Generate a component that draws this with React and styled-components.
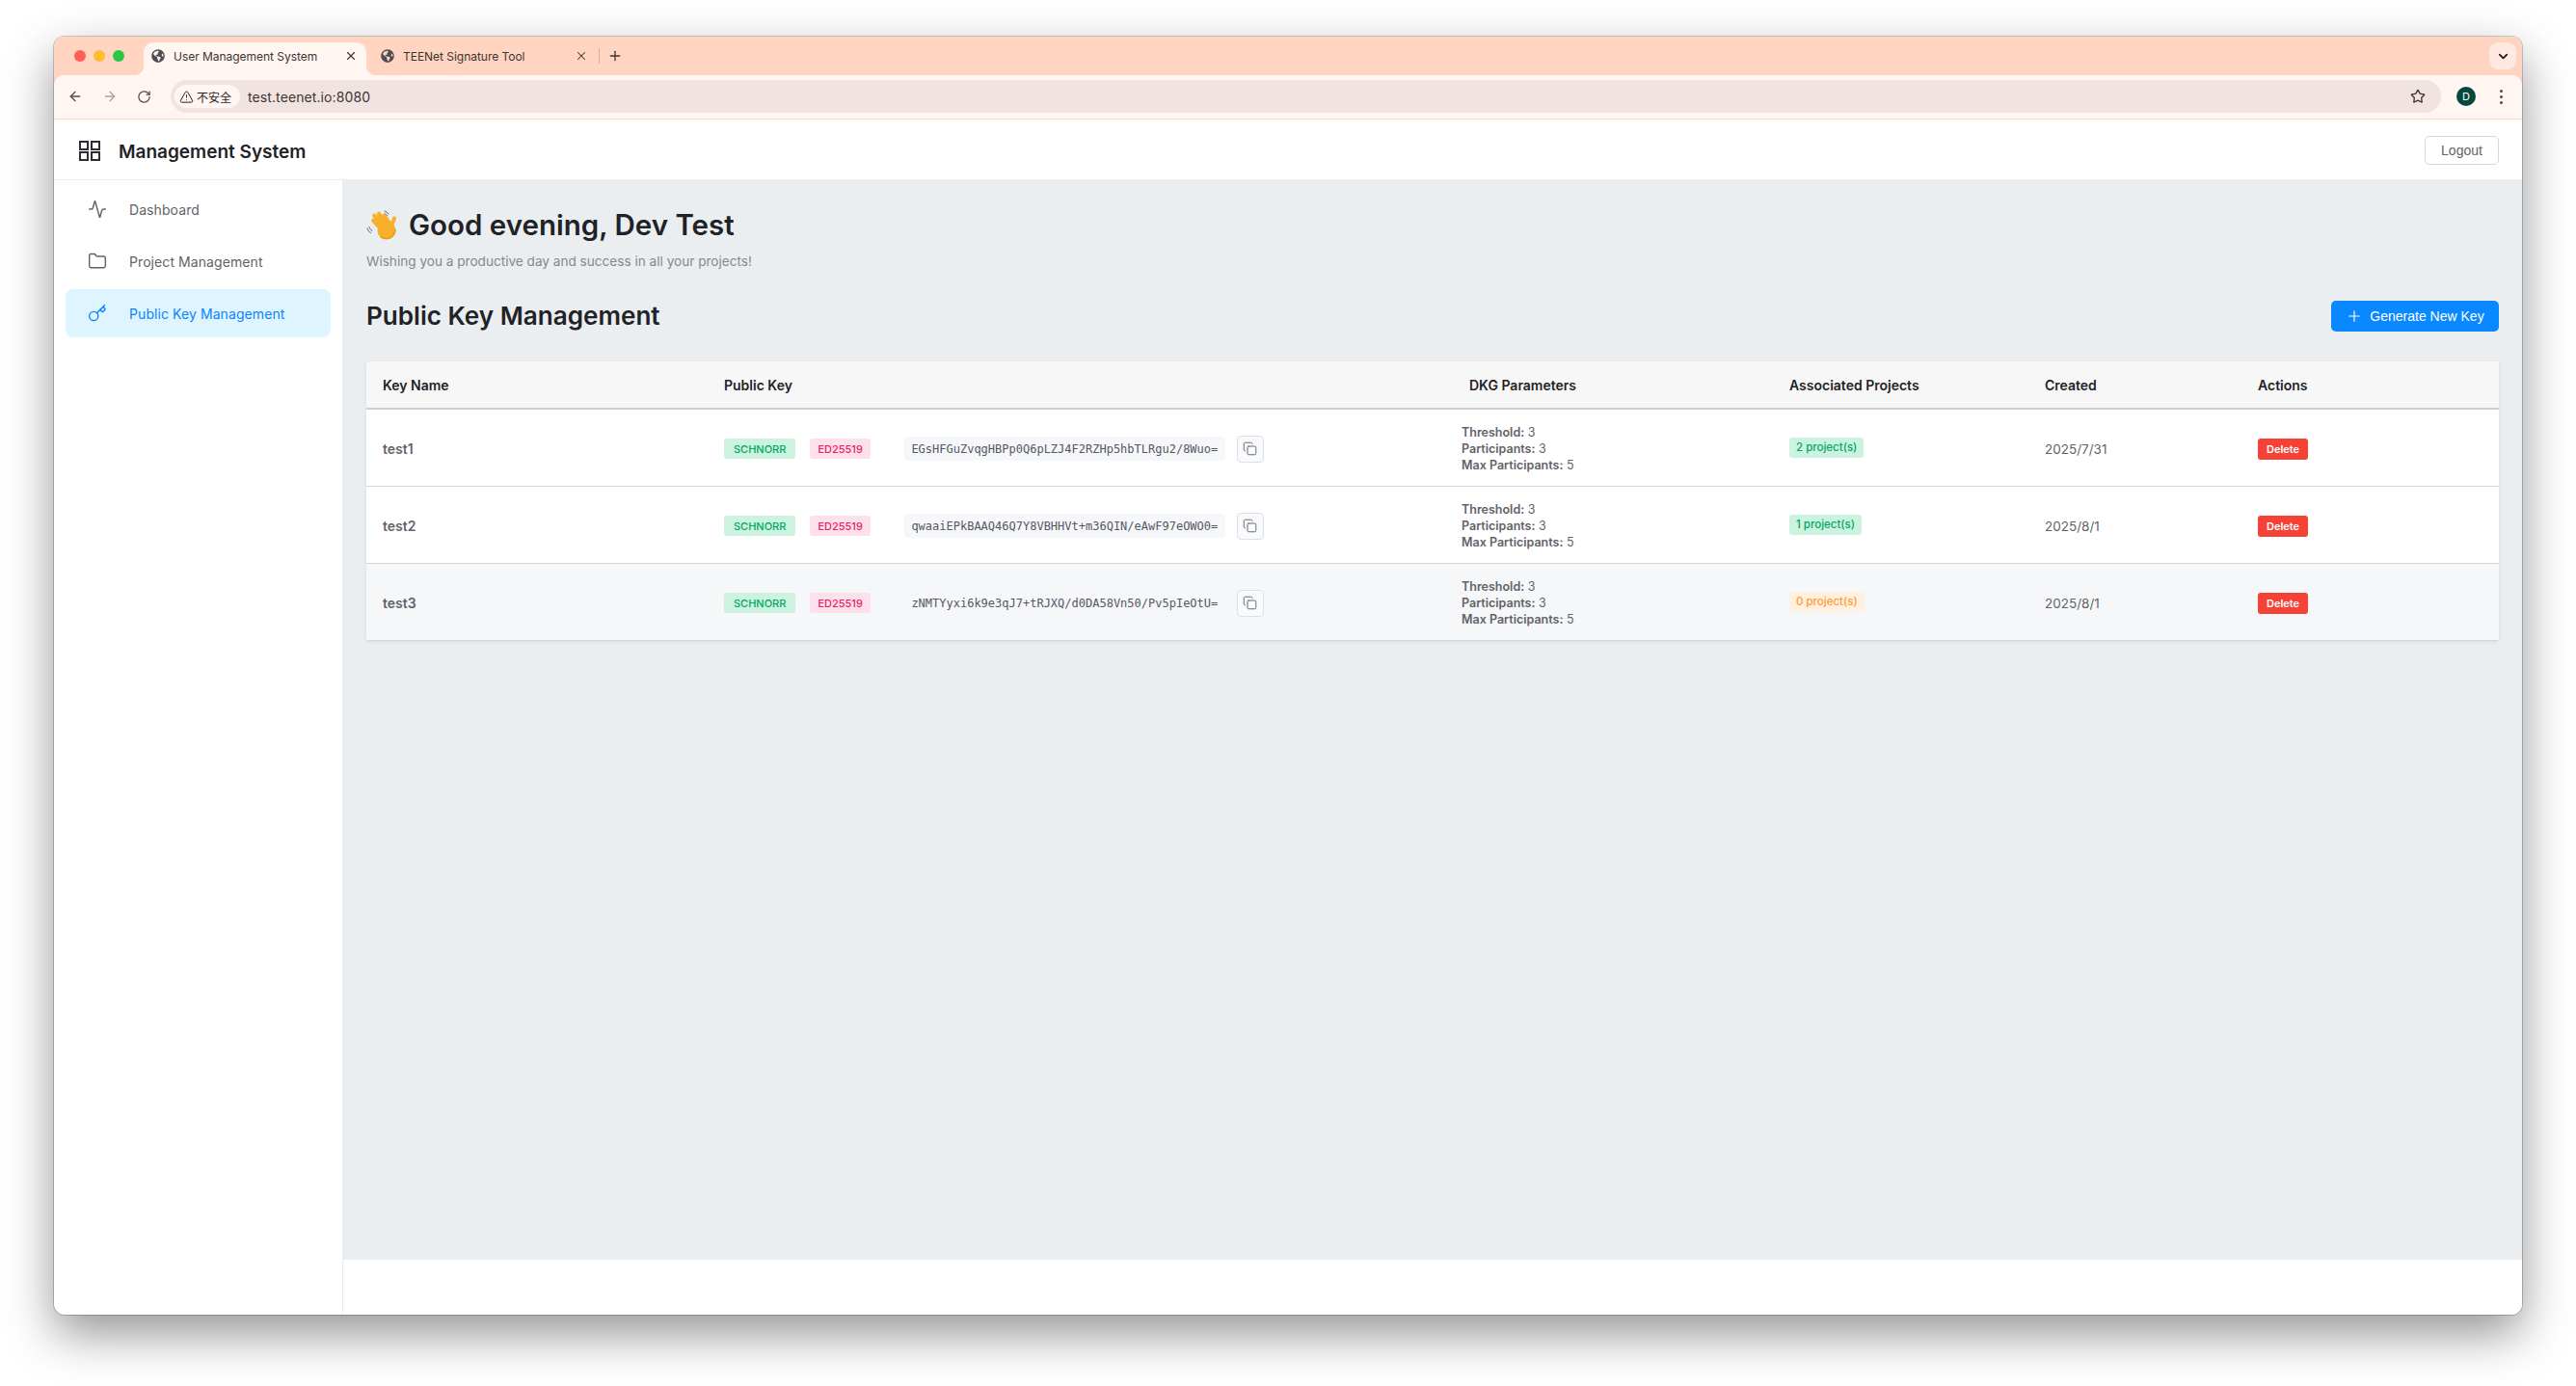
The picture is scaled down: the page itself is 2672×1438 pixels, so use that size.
import React from 'react';
import styled, { createGlobalStyle } from 'styled-components';
import {
  Activity,
  ArrowLeft,
  ArrowRight,
  ChevronDown,
  Copy,
  Folder,
  Key,
  Plus,
  RotateCw,
  Star,
  TriangleAlert,
  X,
} from 'lucide-react';
import { FaGlobeAmericas } from 'react-icons/fa';

const GlobalStyle = createGlobalStyle`
  html, body {
    margin: 0;
    padding: 0;
    background: #fff;
  }
  * {
    box-sizing: border-box;
  }
  body {
    font-family: Inter, "Liberation Sans", sans-serif;
  }
`;

const Page = styled.div`
  width: 2672px;
  height: 1438px;
  padding: 38px 56px 74px;
  overflow: hidden;
`;

const Window = styled.div`
  height: 1326px;
  display: flex;
  flex-direction: column;
  border-radius: 11px;
  overflow: hidden;
  background: #fff;
  box-shadow: 0 0 0 1px rgba(0, 0, 0, 0.2), 0 20px 50px rgba(0, 0, 0, 0.42);
`;

const Chrome = styled.div`
  background: #ffd4c0;
  flex: none;
`;

const TabStrip = styled.div`
  height: 40px;
  display: flex;
  align-items: flex-end;
  padding: 0 6px 0 21px;
`;

const Lights = styled.div`
  display: flex;
  gap: 8px;
  align-self: center;
  margin-right: 20px;
`;

const Light = styled.span`
  width: 12px;
  height: 12px;
  border-radius: 50%;
  background: ${(p) => p.$color};
`;

const Tabs = styled.div`
  display: flex;
  gap: 7px;
  align-items: flex-end;
`;

const Tab = styled.div`
  position: relative;
  height: 34px;
  display: flex;
  align-items: center;
  gap: 9px;
  padding: 0 9px 6px 8px;
  width: ${(p) => (p.$active ? '231px' : '232px')};
  border-radius: 10px 10px 0 0;
  background: ${(p) => (p.$active ? '#fff5f1' : 'transparent')};
  color: #3d3532;
  font-size: 12px;
  letter-spacing: -0.03px;

  svg.globe {
    color: #4b4d52;
    flex: none;
  }

  ${(p) =>
    p.$active &&
    `
    &::before,
    &::after {
      content: '';
      position: absolute;
      bottom: 0;
      width: 10px;
      height: 10px;
    }
    &::before {
      left: -10px;
      background: radial-gradient(circle at 0 0, transparent 10px, #fff5f1 10.5px);
    }
    &::after {
      right: -10px;
      background: radial-gradient(circle at 100% 0, transparent 10px, #fff5f1 10.5px);
    }
  `}
`;

const TabTitle = styled.span`
  flex: 1;
  white-space: nowrap;
`;

const TabDivider = styled.span`
  width: 1px;
  height: 16px;
  background: #f0a988;
  margin: 0 8px 12px 2px;
`;

const NewTab = styled.span`
  display: flex;
  margin-bottom: 12px;
  color: #3d3532;
`;

const TabMenu = styled.div`
  width: 28px;
  height: 28px;
  margin: 0 0 6px auto;
  border-radius: 9px;
  background: #ffe8dd;
  display: flex;
  align-items: center;
  justify-content: center;
  color: #1d1a19;
`;

const Toolbar = styled.div`
  position: relative;
  height: 46px;
  display: flex;
  align-items: center;
  padding: 0 16px 1px 14px;
  background: #fff5f1;
  border-bottom: 1px solid #ffd9c8;
  border-radius: 10px 10px 0 0;
`;

const NavButton = styled.span`
  display: flex;
  width: 16px;
  margin-right: 20px;
  color: ${(p) => (p.$muted ? '#b0a19b' : '#5a4a44')};
`;

const Omnibox = styled.div`
  flex: 1;
  height: 34px;
  margin-left: -1px;
  padding: 0 16px 0 4px;
  display: flex;
  align-items: center;
  border-radius: 17px;
  background: #f0e3e0;
  color: #3d3532;
`;

const SecurityChip = styled.div`
  width: 68px;
  height: 24px;
  padding-left: 5px;
  display: flex;
  align-items: center;
  gap: 3px;
  border-radius: 12px;
  background: #fff5f1;
  font: 12px "Noto Sans CJK SC", sans-serif;
  color: #2b2523;
`;

const Url = styled.span`
  flex: 1;
  margin-left: 8px;
  font-size: 14px;
  letter-spacing: 0.1px;
`;

const Avatar = styled.span`
  width: 20px;
  height: 20px;
  margin-left: 16px;
  border-radius: 50%;
  background: #054a3c;
  color: #fff;
  font-size: 11px;
  display: flex;
  align-items: center;
  justify-content: center;
`;

const MenuDots = styled.span`
  width: 12px;
  margin-left: 20px;
  display: flex;
  flex-direction: column;
  align-items: center;
  gap: 3px;

  i {
    width: 3px;
    height: 3px;
    border-radius: 50%;
    background: #5a4a44;
  }
`;

const AppHeader = styled.header`
  flex: none;
  height: 63px;
  display: flex;
  align-items: center;
  padding: 2px 24px 0 26px;
  border-bottom: 1px solid #ececec;
`;

const AppTitle = styled.h1`
  margin: 2px 0 0 19px;
  flex: 1;
  font-size: 19px;
  font-weight: 600;
  color: #1f2226;
`;

const LogoutButton = styled.button`
  width: 77px;
  height: 30px;
  padding: 0;
  border: 1px solid #d6d6d6;
  border-radius: 5px;
  background: #fff;
  color: #5f6368;
  font: 14px "Liberation Sans", sans-serif;
`;

const Body = styled.div`
  flex: 1;
  min-height: 0;
  display: flex;
`;

const Sidebar = styled.nav`
  flex: none;
  width: 300px;
  padding: 5px 12px;
  display: flex;
  flex-direction: column;
  gap: 4px;
  border-right: 1px solid #ececec;
`;

const NavItem = styled.div`
  height: 50px;
  display: flex;
  align-items: center;
  gap: 23px;
  padding-left: 23px;
  border-radius: 8px;
  font-size: 14px;
  letter-spacing: 0.08px;
  color: ${(p) => (p.$active ? '#0a84ff' : '#5f6368')};
  background: ${(p) => (p.$active ? '#def4fe' : 'transparent')};
`;

const Main = styled.main`
  flex: 1;
  min-width: 0;
  display: flex;
  flex-direction: column;
`;

const Content = styled.div`
  flex: 1;
  padding: 24px 24px 0;
  background: #ebeef1;
`;

const Footer = styled.footer`
  flex: none;
  height: 57px;
  background: #fff;
`;

const Greeting = styled.h2`
  margin: 0;
  display: flex;
  align-items: center;
  gap: 12px;
  height: 44px;
  font-size: 29.5px;
  font-weight: 600;
  color: #1f2226;
`;

const Subtitle = styled.p`
  margin: 6px 0 0;
  font-size: 13.6px;
  line-height: 20px;
  color: #85888e;
`;

const SectionHead = styled.div`
  margin-top: 31px;
  display: flex;
  align-items: center;
  justify-content: space-between;
`;

const SectionTitle = styled.h3`
  margin: 0;
  font-size: 26.1px;
  line-height: 32px;
  font-weight: 600;
  color: #1f2226;
`;

const PrimaryButton = styled.button`
  width: 174px;
  height: 32px;
  padding: 0;
  display: flex;
  align-items: center;
  justify-content: center;
  gap: 7px;
  border: 0;
  border-radius: 5px;
  background: #0a88ff;
  color: #fff;
  font: 14px "Liberation Sans", sans-serif;
`;

const Card = styled.div`
  margin-top: 31px;
  background: #fff;
  border-radius: 3px;
  overflow: hidden;
  box-shadow: 0 1px 4px rgba(0, 0, 0, 0.08);
`;

const Table = styled.table`
  width: 100%;
  table-layout: fixed;
  border-collapse: separate;
  border-spacing: 0;
`;

const HeadCell = styled.th`
  height: 50px;
  padding: 0 0 0 ${(p) => p.$inset || 17}px;
  text-align: left;
  font-size: 14px;
  font-weight: 600;
  color: #1f2226;
  background: #f7f7f8;
  border-bottom: 2px solid #cfcfcf;
`;

const Row = styled.tr`
  background: ${(p) => (p.$hover ? '#f6f7f9' : '#fff')};
`;

const Cell = styled.td`
  height: 80px;
  padding: 2px 0 0 17px;
  vertical-align: middle;
  border-bottom: 1px solid #d4d6d9;
  font-size: 14px;
  color: #5f6368;
`;

const DateText = styled.span`
  font-size: 13.5px;
`;

const KeyName = styled.span`
  font-weight: 600;
`;

const KeyLine = styled.div`
  display: flex;
  align-items: center;
`;

const Badge = styled.span`
  height: 21px;
  padding: 0 ${(p) => p.$pad}px;
  margin-right: ${(p) => p.$gap}px;
  display: inline-flex;
  align-items: center;
  border-radius: 3px;
  font-size: 11px;
  font-weight: 500;
  color: ${(p) => p.$color};
  background: ${(p) => p.$bg};
`;

const KeyCode = styled.code`
  width: 333px;
  height: 25px;
  display: flex;
  align-items: center;
  justify-content: center;
  border-radius: 4px;
  background: #f5f7fa;
  color: #55585e;
  font: 12px "DejaVu Sans Mono", monospace;
  white-space: nowrap;
`;

const CopyButton = styled.button`
  width: 28px;
  height: 28px;
  margin-left: 12px;
  padding: 0;
  display: flex;
  align-items: center;
  justify-content: center;
  border: 1px solid #dcdfe6;
  border-radius: 4px;
  background: #f9fafb;
  color: #5f6368;
`;

const Params = styled.div`
  font-size: 12.5px;
  line-height: 17px;
  color: #5f6368;

  strong {
    font-weight: 600;
  }
`;

const ProjectTag = styled.span`
  height: 21px;
  padding: 0 7px;
  margin-bottom: 3px;
  display: inline-flex;
  align-items: center;
  border-radius: 3px;
  font-size: 11.5px;
  font-weight: 500;
  color: ${(p) => (p.$empty ? '#ff9a2e' : '#00a862')};
  background: ${(p) => (p.$empty ? '#fff0e2' : '#ccf2e0')};
`;

const DeleteButton = styled.button`
  width: 52px;
  height: 22px;
  padding: 0;
  border: 0;
  border-radius: 3px;
  background: #f44336;
  color: #fff;
  font-family: Inter, sans-serif;
  font-size: 11px;
  font-weight: 600;
`;

const columns = [354, 765, 340, 265, 221, 267];

const keys = [
  { name: 'test1', key: 'EGsHFGuZvqgHBPp0Q6pLZJ4F2RZHp5hbTLRgu2/8Wuo=', projects: 2, created: '2025/7/31' },
  { name: 'test2', key: 'qwaaiEPkBAAQ46Q7Y8VBHHVt+m36QIN/eAwF97eOWO0=', projects: 1, created: '2025/8/1' },
  { name: 'test3', key: 'zNMTYyxi6k9e3qJ7+tRJXQ/d0DA58Vn50/Pv5pIeOtU=', projects: 0, created: '2025/8/1', hover: true },
];

const GridIcon = () => (
  <svg width="22" height="21" viewBox="0 0 22 21" fill="none" stroke="#2b2e33" strokeWidth="2">
    <rect x="1" y="1" width="8" height="8" />
    <rect x="13" y="1" width="8" height="8" />
    <rect x="1" y="12" width="8" height="8" />
    <rect x="13" y="12" width="8" height="8" />
  </svg>
);

const WaveIcon = () => (
  <svg width="32" height="34" viewBox="10 10 32 34" fill="none" strokeLinecap="round">
    <g stroke="#5b6068" strokeWidth="1">
      <path d="M11 31c.6 2 1.8 3.6 3.6 4.8" />
      <path d="M13 29.5c.5 1.6 1.5 3 2.8 4" />
      <path d="M29 13c1.6.4 3 1.4 4 3" />
      <path d="M29 15.5c1 .3 2 1 2.6 2" />
    </g>
    <g stroke="#f7b02c" strokeWidth="4.6">
      <path d="M27 33 17.5 23" />
      <path d="M29 29 18.5 18" />
      <path d="M31 27 23 16" />
      <path d="M34 26 28.5 18" />
      <path d="M35.5 30 39 20.5" strokeWidth="4" />
    </g>
    <ellipse cx="31" cy="33" rx="9.5" ry="9.5" fill="#f7b02c" />
    <path d="M25 40c3 2 8 2 11 0 2-1.6 3.400-4 4-7" stroke="#ee9318" strokeWidth="1.4" />
  </svg>
);

const App = () => (
  <Page>
    <GlobalStyle />
    <Window>
      <Chrome>
        <TabStrip>
          <Lights>
            <Light $color="#ff5f57" />
            <Light $color="#febc2e" />
            <Light $color="#28c840" />
          </Lights>
          <Tabs>
            <Tab $active>
              <FaGlobeAmericas className="globe" size={14} />
              <TabTitle>User Management System</TabTitle>
              <X size={14} strokeWidth={2} />
            </Tab>
            <Tab>
              <FaGlobeAmericas className="globe" size={14} />
              <TabTitle>TEENet Signature Tool</TabTitle>
              <X size={14} strokeWidth={1.8} />
            </Tab>
          </Tabs>
          <TabDivider />
          <NewTab>
            <Plus size={16} strokeWidth={2} />
          </NewTab>
          <TabMenu>
            <ChevronDown size={15} strokeWidth={2.8} />
          </TabMenu>
        </TabStrip>
        <Toolbar>
          <NavButton>
            <ArrowLeft size={16} strokeWidth={2} />
          </NavButton>
          <NavButton $muted>
            <ArrowRight size={16} strokeWidth={2} />
          </NavButton>
          <NavButton>
            <RotateCw size={15} strokeWidth={2} />
          </NavButton>
          <Omnibox>
            <SecurityChip>
              <TriangleAlert size={15} strokeWidth={1.6} />
              不安全
            </SecurityChip>
            <Url>test.teenet.io:8080</Url>
            <Star size={16} strokeWidth={2} />
          </Omnibox>
          <Avatar>D</Avatar>
          <MenuDots>
            <i />
            <i />
            <i />
          </MenuDots>
        </Toolbar>
      </Chrome>

      <AppHeader>
        <GridIcon />
        <AppTitle>Management System</AppTitle>
        <LogoutButton>Logout</LogoutButton>
      </AppHeader>

      <Body>
        <Sidebar>
          <NavItem>
            <Activity size={20} strokeWidth={1.7} />
            Dashboard
          </NavItem>
          <NavItem>
            <Folder size={20} strokeWidth={1.7} />
            Project Management
          </NavItem>
          <NavItem $active>
            <Key size={20} strokeWidth={1.7} />
            Public Key Management
          </NavItem>
        </Sidebar>

        <Main>
          <Content>
            <Greeting>
              <WaveIcon />
              Good evening, Dev Test
            </Greeting>
            <Subtitle>Wishing you a productive day and success in all your projects!</Subtitle>

            <SectionHead>
              <SectionTitle>Public Key Management</SectionTitle>
              <PrimaryButton>
                <Plus size={18} strokeWidth={1.6} />
                Generate New Key
              </PrimaryButton>
            </SectionHead>

            <Card>
              <Table>
                <colgroup>
                  {columns.map((w, i) => (
                    <col key={i} width={w} />
                  ))}
                </colgroup>
                <thead>
                  <tr>
                    <HeadCell>Key Name</HeadCell>
                    <HeadCell>Public Key</HeadCell>
                    <HeadCell $inset={25}>DKG Parameters</HeadCell>
                    <HeadCell>Associated Projects</HeadCell>
                    <HeadCell>Created</HeadCell>
                    <HeadCell>Actions</HeadCell>
                  </tr>
                </thead>
                <tbody>
                  {keys.map((k) => (
                    <Row key={k.name} $hover={k.hover}>
                      <Cell>
                        <KeyName>{k.name}</KeyName>
                      </Cell>
                      <Cell>
                        <KeyLine>
                          <Badge $pad={10} $gap={15} $color="#00a862" $bg="#ccf2e0">SCHNORR</Badge>
                          <Badge $pad={8} $gap={35} $color="#e91e63" $bg="#fde0ec">ED25519</Badge>
                          <KeyCode>{k.key}</KeyCode>
                          <CopyButton>
                            <Copy size={15} strokeWidth={1.5} />
                          </CopyButton>
                        </KeyLine>
                      </Cell>
                      <Cell>
                        <Params>
                          <div><strong>Threshold:</strong> 3</div>
                          <div><strong>Participants:</strong> 3</div>
                          <div><strong>Max Participants:</strong> 5</div>
                        </Params>
                      </Cell>
                      <Cell>
                        <ProjectTag $empty={k.projects === 0}>{k.projects} project(s)</ProjectTag>
                      </Cell>
                      <Cell>
                        <DateText>{k.created}</DateText>
                      </Cell>
                      <Cell>
                        <DeleteButton>Delete</DeleteButton>
                      </Cell>
                    </Row>
                  ))}
                </tbody>
              </Table>
            </Card>
          </Content>
          <Footer />
        </Main>
      </Body>
    </Window>
  </Page>
);

export default App;
